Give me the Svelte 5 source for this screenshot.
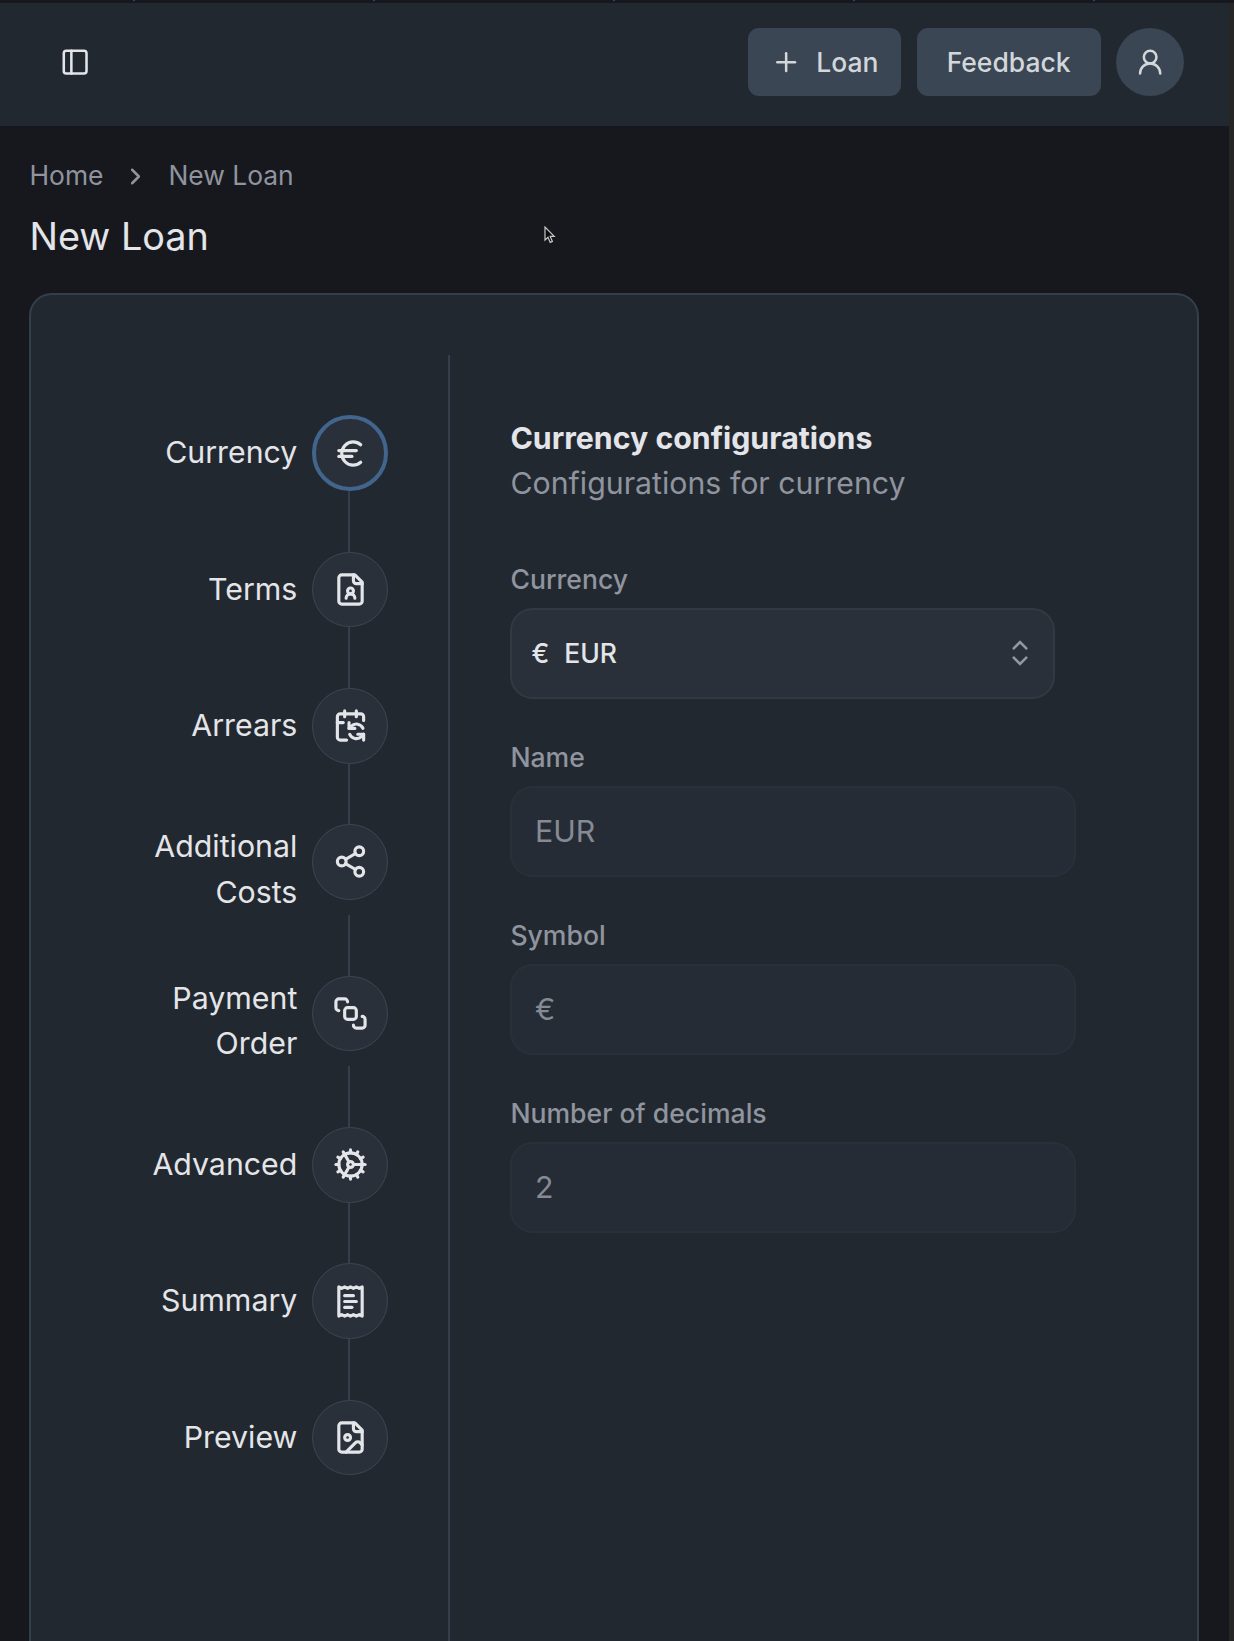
<script>
	const steps = [
		{ label: 'Currency', icon: 'euro' },
		{ label: 'Terms', icon: 'fileUser' },
		{ label: 'Arrears', icon: 'calendarSync' },
		{ label: 'Additional Costs', icon: 'share' },
		{ label: 'Payment Order', icon: 'bringToFront' },
		{ label: 'Advanced', icon: 'cog' },
		{ label: 'Summary', icon: 'receipt' },
		{ label: 'Preview', icon: 'fileImage' }
	];

	const fields = [
		{ id: 'name', label: 'Name', value: 'EUR' },
		{ id: 'symbol', label: 'Symbol', value: '€' },
		{ id: 'decimals', label: 'Number of decimals', value: '2' }
	];

	// 24x24 stroke icons
	const icons = {
		panel: ['M5 3h14a2 2 0 0 1 2 2v14a2 2 0 0 1-2 2H5a2 2 0 0 1-2-2V5a2 2 0 0 1 2-2z', 'M9 3v18'],
		plus: ['M5 12h14', 'M12 5v14'],
		user: ['M7 8a5 5 0 1 0 10 0a5 5 0 1 0-10 0', 'M20 21a8 8 0 0 0-16 0'],
		chevron: ['m9 18 6-6-6-6'],
		euro: [
			'M4 10h12',
			'M4 14h9',
			'M19 6a7.7 7.7 0 0 0-5.2-2A7.9 7.9 0 0 0 6 12c0 4.4 3.5 8 7.8 8 2 0 3.8-.8 5.2-2'
		],
		fileUser: [
			'M14 2v4a2 2 0 0 0 2 2h4',
			'M15 18a3 3 0 1 0-6 0',
			'M15 2H6a2 2 0 0 0-2 2v16a2 2 0 0 0 2 2h12a2 2 0 0 0 2-2V7z',
			'M10 13a2 2 0 1 0 4 0a2 2 0 1 0-4 0'
		],
		calendarSync: [
			'M11 10v4h4',
			'm11 14 1.535-1.605a5 5 0 0 1 8 1.5',
			'M16 2v4',
			'm21 18-1.535 1.605a5 5 0 0 1-8-1.5',
			'M21 22v-4h-4',
			'M21 8.5V6a2 2 0 0 0-2-2H5a2 2 0 0 0-2 2v14a2 2 0 0 0 2 2h4.3',
			'M3 10h4',
			'M8 2v4'
		],
		share: [
			'M15 5a3 3 0 1 0 6 0a3 3 0 1 0-6 0',
			'M3 12a3 3 0 1 0 6 0a3 3 0 1 0-6 0',
			'M15 19a3 3 0 1 0 6 0a3 3 0 1 0-6 0',
			'M8.59 13.51 15.42 17.49',
			'M15.41 6.51 8.59 10.49'
		],
		bringToFront: [
			'M10 8h4a2 2 0 0 1 2 2v4a2 2 0 0 1-2 2h-4a2 2 0 0 1-2-2v-4a2 2 0 0 1 2-2z',
			'M4 10a2 2 0 0 1-2-2V4a2 2 0 0 1 2-2h4a2 2 0 0 1 2 2',
			'M14 20a2 2 0 0 0 2 2h4a2 2 0 0 0 2-2v-4a2 2 0 0 0-2-2'
		],
		cog: [
			'M12 20a8 8 0 1 0 0-16 8 8 0 0 0 0 16Z',
			'M12 14a2 2 0 1 0 0-4 2 2 0 0 0 0 4Z',
			'M12 2v2',
			'M12 22v-2',
			'm17 20.66-1-1.73',
			'M11 10.27 7 3.34',
			'm20.66 17-1.73-1',
			'm3.34 7 1.73 1',
			'M14 12h8',
			'M2 12h2',
			'm20.66 7-1.73 1',
			'm3.34 17 1.73-1',
			'm17 3.34-1 1.73',
			'm11 13.73-4 6.93'
		],
		receipt: [
			'M4 2v20l2-1 2 1 2-1 2 1 2-1 2 1 2-1 2 1V2l-2 1-2-1-2 1-2-1-2 1-2-1-2 1Z',
			'M14 8H8',
			'M16 12H8',
			'M13 16H8'
		],
		fileImage: [
			'M15 2H6a2 2 0 0 0-2 2v16a2 2 0 0 0 2 2h12a2 2 0 0 0 2-2V7Z',
			'M14 2v4a2 2 0 0 0 2 2h4',
			'M8 12a2 2 0 1 0 4 0a2 2 0 1 0-4 0',
			'm20 17-1.296-1.296a2.41 2.41 0 0 0-3.408 0L9 22'
		]
	};

	const ticks = [1, 2, 3, 4, 5];

	let current = $state(0);
</script>

{#snippet icon(name)}
	<svg class="icon" viewBox="0 0 24 24">
		{#each icons[name] as d}
			<path {d} />
		{/each}
	</svg>
{/snippet}

<div class="window">
	<div class="strip">
		{#each ticks as tick}
			<span class="tick"></span>
		{/each}
	</div>

	<div class="body">
		<div class="page">
			<header>
				<button class="toggle" aria-label="Toggle sidebar">{@render icon('panel')}</button>
				<div class="actions">
					<button class="button with-icon">{@render icon('plus')}Loan</button>
					<button class="button">Feedback</button>
					<button class="avatar" aria-label="Account">{@render icon('user')}</button>
				</div>
			</header>

			<main>
				<nav class="breadcrumb">
					<span>Home</span>
					{@render icon('chevron')}
					<span>New Loan</span>
				</nav>
				<h1>New Loan</h1>

				<div class="card">
					<ol class="steps">
						{#each steps as step, i}
							<li>
								<span class="step-label">{step.label}</span>
								<button
									class="circle"
									class:active={current === i}
									aria-label={step.label}
									onclick={() => (current = i)}
								>
									{@render icon(step.icon)}
								</button>
							</li>
							{#if i < steps.length - 1}
								<li class="line"></li>
							{/if}
						{/each}
					</ol>

					<section class="form">
						<h2>Currency configurations</h2>
						<p>Configurations for currency</p>

						<div class="field">
							<span class="label">Currency</span>
							<button class="select">
								<span class="sign">€</span>
								<span>EUR</span>
								<svg class="sort" viewBox="0 0 15 15">
									<path d="M4.2 5.7 7.5 2.4l3.3 3.3M4.2 9.3l3.3 3.3 3.3-3.3" />
								</svg>
							</button>
						</div>

						{#each fields as field}
							<div class="field">
								<label class="label" for={field.id}>{field.label}</label>
								<input id={field.id} value={field.value} disabled />
							</div>
						{/each}
					</section>
				</div>
			</main>
		</div>
		<div class="scrollbar"></div>
	</div>

	<svg class="cursor" viewBox="0 0 12 18">
		<path d="M1 1v13l3-2.8 2.2 5.2 2.2-1-2.2-5h4z" />
	</svg>
</div>

<style>
	:global(body) {
		margin: 0;
		background: #17181d;
		font-family: Inter, sans-serif;
		overflow: hidden;
	}

	button {
		font: inherit;
		color: inherit;
		border: none;
		padding: 0;
		background: none;
		cursor: pointer;
	}

	.icon {
		width: 30.3px;
		height: 30.3px;
		flex: none;
		fill: none;
		stroke: currentColor;
		stroke-width: 2;
		stroke-linecap: round;
		stroke-linejoin: round;
	}

	.window {
		position: relative;
		height: 1641px;
		overflow: hidden;
		display: flex;
		flex-direction: column;
		background: #17181d;
		color: #e4e5e8;
		font-size: 30.3px;
		line-height: 45.4px;
	}

	.strip {
		height: 3px;
		flex: none;
		display: flex;
		gap: 238px;
		padding-left: 133px;
	}

	.tick {
		width: 2px;
		height: 1px;
		flex: none;
		background: #35465c;
	}

	.body {
		flex: 1;
		min-height: 0;
		display: flex;
	}

	.page {
		flex: 1;
		display: flex;
		flex-direction: column;
	}

	.scrollbar {
		width: 5px;
		background: #262626;
	}

	header {
		height: 123px;
		flex: none;
		box-sizing: border-box;
		display: flex;
		align-items: center;
		justify-content: space-between;
		padding: 0 45px 5px 60px;
		background: #222830;
	}

	.toggle {
		display: flex;
	}

	.actions {
		display: flex;
		gap: 15.4px;
	}

	.button,
	.avatar {
		height: 68px;
		background: #3a4653;
		color: #d3d6da;
	}

	.button {
		display: flex;
		align-items: center;
		gap: 15px;
		padding: 1px 30px 0;
		border-radius: 11px;
		font-size: 26.5px;
		font-weight: 500;
	}

	.button.with-icon {
		padding: 1px 22.8px 0;
	}

	.avatar {
		width: 68px;
		border-radius: 50%;
		display: flex;
		align-items: center;
		justify-content: center;
	}

	main {
		flex: 1;
		display: flex;
		flex-direction: column;
		padding: 31px 30px 0 29px;
	}

	.breadcrumb {
		display: flex;
		align-items: center;
		gap: 19px;
		height: 38px;
		padding-left: 0.5px;
		font-size: 26.4px;
		color: #8f949e;
	}

	.breadcrumb .icon {
		width: 27px;
		height: 27px;
		stroke-width: 2.2;
	}

	h1 {
		margin: 13px 0 29px 0.5px;
		font-size: 37.8px;
		line-height: 56px;
		font-weight: 400;
	}

	.card {
		flex: 1;
		display: flex;
		padding-top: 60px;
		border: 2px solid #353f4c;
		border-bottom: none;
		border-radius: 22.7px 22.7px 0 0;
		background: #222830;
	}

	.steps {
		width: 419px;
		box-sizing: border-box;
		margin: 0;
		padding: 60.3px 60px 0 0;
		list-style: none;
		border-right: 2px solid #353f4c;
	}

	.steps li {
		display: flex;
		justify-content: flex-end;
		gap: 15px;
	}

	.step-label {
		width: 160px;
		align-self: center;
		text-align: right;
	}

	.steps .line {
		width: 2px;
		height: 60.6px;
		margin-left: auto;
		margin-right: 38px;
		background: #353f4c;
	}

	.circle {
		width: 75.7px;
		height: 75.7px;
		flex: none;
		box-sizing: border-box;
		display: flex;
		align-items: center;
		justify-content: center;
		border: 1.5px solid #3c4652;
		border-radius: 50%;
		background: #2a303a;
	}

	.circle.active {
		border: 4px solid #41658c;
	}

	.circle .icon {
		width: 35px;
		height: 35px;
		stroke-width: 2.15;
	}

	.form {
		padding: 60.6px 0 0 60.4px;
	}

	h2,
	p {
		margin: 0;
		font-size: 30.3px;
	}

	h2 {
		font-weight: 700;
	}

	p {
		margin-bottom: 54.8px;
		color: #8f949e;
	}

	.field {
		display: flex;
		flex-direction: column;
		margin-bottom: 40px;
	}

	.label {
		margin-bottom: 8.7px;
		font-size: 26.6px;
		line-height: 37.8px;
		font-weight: 500;
		color: #8f949e;
	}

	.select,
	input {
		height: 91.5px;
		box-sizing: border-box;
		border-radius: 22.7px;
	}

	.select {
		width: 545px;
		display: flex;
		align-items: center;
		padding: 0 17.5px 0 19px;
		border: 2px solid #333943;
		background: #2a303a;
		font-size: 26.5px;
		font-weight: 500;
	}

	.sign {
		margin-right: 15px;
	}

	.sort {
		width: 32px;
		height: 32px;
		margin-left: auto;
		fill: none;
		stroke: #9297a0;
		stroke-width: 1.2;
	}

	input {
		width: 566px;
		padding: 0 22.6px;
		border: 2px solid #2a303a;
		background: #262c36;
		font-family: inherit;
		font-size: 30.3px;
		color: #858a94;
	}

	.cursor {
		position: absolute;
		left: 544px;
		top: 226px;
		width: 12px;
		height: 18px;
		fill: #0c0c0e;
		stroke: #c8c8c8;
		stroke-width: 1.2;
	}
</style>
